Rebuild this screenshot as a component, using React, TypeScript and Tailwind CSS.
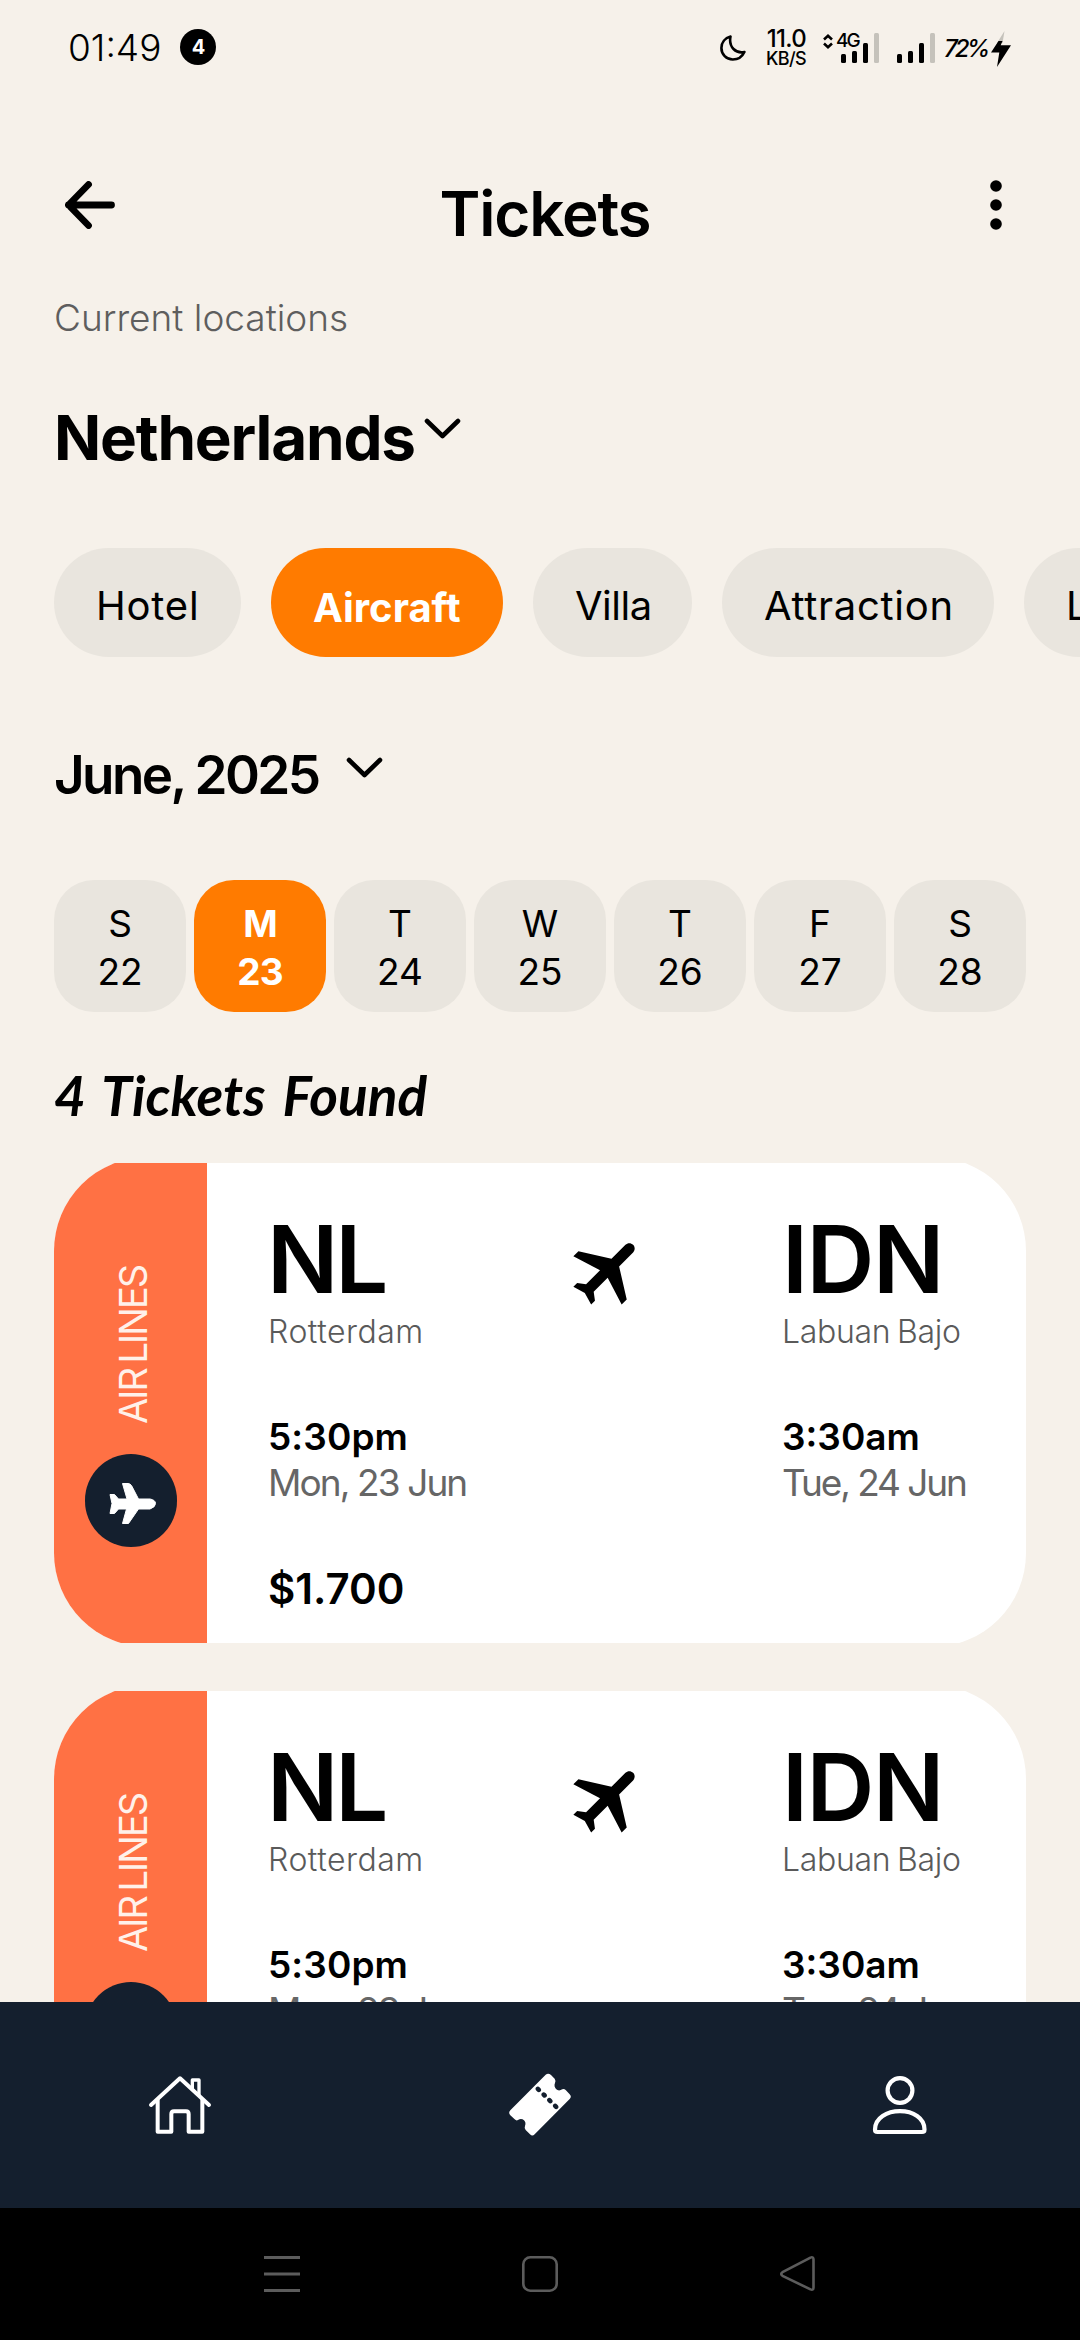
import type { ReactNode } from "react";

function SignalBars() {
  return (
    <svg viewBox="0 0 38 30" className="h-[30px] w-[38px]">
      <rect x="0" y="21" width="5" height="9" rx="1.5" />
      <rect x="11" y="18" width="5" height="12" rx="1.5" />
      <rect x="22" y="10" width="5" height="20" rx="1.5" />
      <rect x="33" y="0" width="5" height="30" rx="1.5" fill="#c5c2bb" />
    </svg>
  );
}

function StatusBar() {
  return (
    <div className="flex h-[94px] shrink-0 items-center pr-[69px] pl-[68px]">
      <span className="text-[37px] font-light leading-none">01:49</span>
      <span className="ml-[19px] flex size-9 items-center justify-center rounded-full bg-black text-[20px] font-bold leading-none text-white">
        4
      </span>
      <div className="ml-auto flex items-center">
        <svg viewBox="0 0 26 26" className="mt-[2px] size-[26px]" fill="none" stroke="black" strokeWidth="2.6" strokeLinejoin="round">
          <path d="M10.5 1.6C5 3 1.4 7.5 1.4 13c0 6.4 5 11.5 11.4 11.5 5.2 0 9.400-2.700 11.600-7.500-4.600 1-8.200-.3-10.900-3-2.800-2.900-4-7.400-3-12.400Z" />
        </svg>
        <div className="ml-[18px] flex w-[42px] flex-col items-end">
          <span className="text-[24px] font-medium leading-[22px] tracking-[-0.7px]">11.0</span>
          <span className="text-[18px] font-medium leading-[17px] tracking-[-0.6px]">KB/S</span>
        </div>
        <div className="relative mt-[2px] ml-[35px]">
          <SignalBars />
          <div className="absolute -top-[1px] -left-[18px] flex items-center gap-[3px]">
            <svg viewBox="0 0 10 15" className="h-[15px] w-[10px]" fill="none" stroke="black" strokeWidth="2.6">
              <path d="M1 5.500 5 1.800 9 5.500M1 9.500 5 13.200 9 9.500" />
            </svg>
            <span className="text-[19px] font-medium leading-[18px] tracking-[-2px]">4G</span>
          </div>
        </div>
        <div className="mt-[2px] ml-[18px]">
          <SignalBars />
        </div>
        <span className="mt-[4px] ml-[9px] w-[47px] text-[24px] font-medium italic leading-none tracking-[-3px]">72%</span>
        <svg viewBox="0 0 20 36" className="mt-[3px] h-[36px] w-[20px]">
          <path d="M13.500 0 6 12h5.500Z" fill="#c5c2bb" />
          <path d="M7.500 10h4l-1.800 4.300H20L6 36l2.300-14.500H0Z" />
        </svg>
      </div>
    </div>
  );
}

function Chevron({ className }: { className: string }) {
  return (
    <svg viewBox="0 0 37 22" className={`h-[22px] w-[37px] ${className}`} fill="none" stroke="black" strokeWidth="4.600" strokeLinecap="round" strokeLinejoin="round">
      <path d="M3 3 18.500 18 34 3" />
    </svg>
  );
}

function Header() {
  return (
    <header className="mt-[66px] flex h-[90px] shrink-0 items-center justify-between pr-[78px] pl-[65px]">
      <svg viewBox="0 0 50 48" className="h-[48px] w-[50px]" fill="none" stroke="black" strokeWidth="6.800" strokeLinecap="round" strokeLinejoin="round">
        <path d="M23.500 3.500 3.500 24l20 20.500M3.500 24H46.500" />
      </svg>
      <h1 className="pt-[17px] pr-[15px] text-[62px] font-semibold leading-none tracking-[-1.2px]">Tickets</h1>
      <svg viewBox="0 0 12 50" className="h-[50px] w-[12px]">
        <circle cx="6" cy="6" r="5.800" />
        <circle cx="6" cy="25" r="5.800" />
        <circle cx="6" cy="44" r="5.800" />
      </svg>
    </header>
  );
}

function Chip({ children, className }: { children: ReactNode; className: string }) {
  return (
    <div className={`flex h-[109px] shrink-0 justify-start rounded-full pl-[42px] leading-[109px] ${className}`}>
      {children}
    </div>
  );
}

const days = [
  ["S", "22"],
  ["M", "23"],
  ["T", "24"],
  ["W", "25"],
  ["T", "26"],
  ["F", "27"],
  ["S", "28"],
];

function Plane() {
  return (
    <svg viewBox="-9.950 9.050 17.150 17.250" className="mt-[80px] h-[62px] w-[62px] shrink-0">
      <path
        transform="rotate(45)"
        d="M21 16v-2l-8-5V3.500c0-.83-.67-1.500-1.500-1.500S10 2.670 10 3.500V9l-8 5v2l8-2.500V19l-2 1.500V22l3.500-1 3.500 1v-1.500L13 19v-5.500l8 2.500z"
      />
    </svg>
  );
}

function Ticket() {
  return (
    <article className="h-[480px] shrink-0 overflow-hidden">
      <div className="-mt-[6px] flex h-[490px] overflow-hidden rounded-[94px] bg-white pt-[6px]">
        <div className="-mt-[6px] flex w-[153px] shrink-0 flex-col items-center bg-[#ff7144] pt-[109px]">
          <div className="ml-[5px] flex h-[158px] rotate-180 items-center text-[38px] leading-[40px] tracking-[-2px] whitespace-nowrap text-[#fff1ea] [word-spacing:-3px] [writing-mode:vertical-rl]">
            AIR LINES
          </div>
          <div className="mt-[30px] flex h-[93px] w-[92px] items-center justify-center rounded-full bg-[#141f2e]">
            <svg viewBox="0 0 47 41" className="mt-[5px] ml-[4px] h-[41px] w-[47px] overflow-visible" fill="white" stroke="white" strokeWidth="1" strokeLinejoin="round">
              <path d="M18 16H9.500L5.500 11.500H1L3 20.500 1 30.500H5.500L9.500 26H17.500L13.500 40.500H19.500L29.500 26H41Q46.500 24 46.500 20.500T41 16H29.500L22.500 2.500Q21 .5 19 .5H13.500Z" />
            </svg>
          </div>
        </div>
        <div className="w-[366px] shrink-0 pt-[56px] pl-[61px]">
          <div className="-ml-[1px] text-[94px] font-semibold leading-[80px] tracking-[-3px]">NL</div>
          <div className="mt-[13px] text-[32px] font-light leading-10 tracking-[0.500px] text-[#5a5a5a]">Rotterdam</div>
          <div className="mt-[62px] text-[37px] font-semibold leading-[46px] tracking-[0.100px]">5:30pm</div>
          <div className="text-[37px] leading-[46px] tracking-[-1.900px] whitespace-nowrap text-[#666]">Mon, 23 Jun</div>
          <div className="mt-[58px] text-[42px] font-semibold leading-[50px]">$1.700</div>
        </div>
        <Plane />
        <div className="pt-[56px] pl-[147px]">
          <div className="text-[94px] font-semibold leading-[80px] tracking-[-1.500px]">IDN</div>
          <div className="mt-[13px] text-[32px] font-light leading-10 tracking-[-0.300px] whitespace-nowrap text-[#5a5a5a] [word-spacing:-2px]">Labuan Bajo</div>
          <div className="mt-[62px] text-[37px] font-semibold leading-[46px]">3:30am</div>
          <div className="text-[37px] leading-[46px] tracking-[-2.100px] whitespace-nowrap text-[#666]">Tue, 24 Jun</div>
        </div>
      </div>
    </article>
  );
}

function BottomNav() {
  return (
    <nav className="grid h-[206px] shrink-0 grid-cols-3 place-items-center bg-[#141f2e] pb-[2px]">
      <svg viewBox="0 0 240 240" className="size-20" fill="none" stroke="white" strokeWidth="12" strokeLinecap="round" strokeLinejoin="round">
        <path d="M33 123 120 43 207 123" />
        <path d="M53 108V203H94V150q0-8 8-8h36q8 0 8 8V203H187V108" />
        <path d="M157 72V48H177V92" strokeWidth="10" />
      </svg>
      <svg viewBox="0 0 240 240" className="size-20">
        <path
          d="M137 32Q145 26 153 33L164 44Q168 50 165 57 161 67 168 75 176 83 187 76 192 73 197 78L209 91Q216 98 209 105L104 211Q97 218 90 211L77 198Q72 193 75 186 79 176 72 169 64 162 54 168 49 171 44 166L31 154Q24 147 31 139Z"
          fill="white"
        />
        <g fill="#141f2e">
          <ellipse cx="115" cy="76" rx="9" ry="7" transform="rotate(45 115 76)" />
          <ellipse cx="132.500" cy="93" rx="9" ry="7" transform="rotate(45 132.500 93)" />
          <ellipse cx="149.500" cy="110" rx="9" ry="7" transform="rotate(45 149.500 110)" />
          <ellipse cx="167" cy="127" rx="9" ry="7" transform="rotate(45 167 127)" />
        </g>
      </svg>
      <svg viewBox="0 0 80 80" className="size-20" fill="none" stroke="white" strokeWidth="4.200">
        <circle cx="40" cy="26.500" r="12.400" />
        <path d="M15 65.500C15 54 27 47.200 40 47.200S64.500 54 64.500 65.500Q64.500 68 62 68H17.500Q15 68 15 65.500Z" />
      </svg>
    </nav>
  );
}

function SystemNav() {
  return (
    <div className="flex h-[132px] shrink-0 items-center justify-center gap-[222px] bg-black">
      <svg viewBox="0 0 36 36" className="size-9" stroke="#5c5c5c" strokeWidth="3">
        <path d="M0 1.500H36M0 18H36M0 34.500H36" />
      </svg>
      <svg viewBox="0 0 36 36" className="size-9" fill="none" stroke="#5c5c5c" strokeWidth="2.600">
        <rect x="1.300" y="1.300" width="33.400" height="33.400" rx="7" />
      </svg>
      <svg viewBox="0 0 36 36" className="size-9" fill="none" stroke="#5c5c5c" strokeWidth="2.600" strokeLinejoin="round">
        <path d="M30.500 1.600Q33.500 .5 33.500 3.500V31.500Q33.500 34.500 30.500 33.400L2.500 19.800Q0 18 2.500 16.200Z" />
      </svg>
    </div>
  );
}

export default function App() {
  return (
    <div className="flex h-[2340px] w-[1080px] flex-col overflow-hidden bg-[#f6f1ea] font-['Inter',sans-serif] text-black">
      <StatusBar />
      <Header />
      <main className="flex min-h-0 flex-1 flex-col overflow-hidden px-[54px]">
        <p className="mt-[42px] h-[52px] shrink-0 text-[37px] font-light leading-[52px] text-[#5e5e5e]">Current locations</p>
        <div className="mt-[59px] flex h-[70px] shrink-0">
          <h2 className="text-[62px] font-bold leading-[70px] tracking-[-1.200px]">Netherlands</h2>
          <Chevron className="mt-[15px] ml-[9px]" />
        </div>
        <div className="mt-[75px] flex shrink-0 gap-[30px] text-[40px]">
          <Chip className="w-[187px] bg-[#e9e5de] pt-[3px] tracking-[0.800px]">Hotel</Chip>
          <Chip className="w-[232px] bg-[#ff7b00] pt-[5px] font-bold text-white">Aircraft</Chip>
          <Chip className="w-[159px] bg-[#e9e5de] pt-[3px] tracking-[-0.500px]">Villa</Chip>
          <Chip className="w-[272px] bg-[#e9e5de] pt-[3px] tracking-[0.700px]">Attraction</Chip>
          <Chip className="w-[232px] bg-[#e9e5de] pt-[3px]">Landmark</Chip>
        </div>
        <div className="mt-[83px] flex h-[70px] shrink-0">
          <h3 className="text-[53px] font-semibold leading-[70px] tracking-[-2.600px]">June, 2025</h3>
          <Chevron className="mt-[17px] ml-[28px]" />
        </div>
        <div className="mt-[70px] flex shrink-0 justify-between text-[37px]">
          {days.map(([day, date]) => (
            <div
              key={date}
              className={
                date === "23"
                  ? "flex h-[132px] w-[132px] flex-col items-center justify-center rounded-[40px] bg-[#ff7b00] pt-[3px] font-bold leading-[48px] tracking-[-0.800px] text-white"
                  : "flex h-[132px] w-[132px] flex-col items-center justify-center rounded-[40px] bg-[#e9e5de] pt-[3px] leading-[48px]"
              }
            >
              <span>{day}</span>
              <span>{date}</span>
            </div>
          ))}
        </div>
        <p className="mt-[48px] h-[70px] shrink-0 font-['Lato',sans-serif] text-[55px] font-bold italic leading-[71px] whitespace-nowrap [word-spacing:5px]">
          4 Tickets Found
        </p>
        <div className="mt-[33px] flex flex-col gap-12">
          <Ticket />
          <Ticket />
        </div>
      </main>
      <BottomNav />
      <SystemNav />
    </div>
  );
}
